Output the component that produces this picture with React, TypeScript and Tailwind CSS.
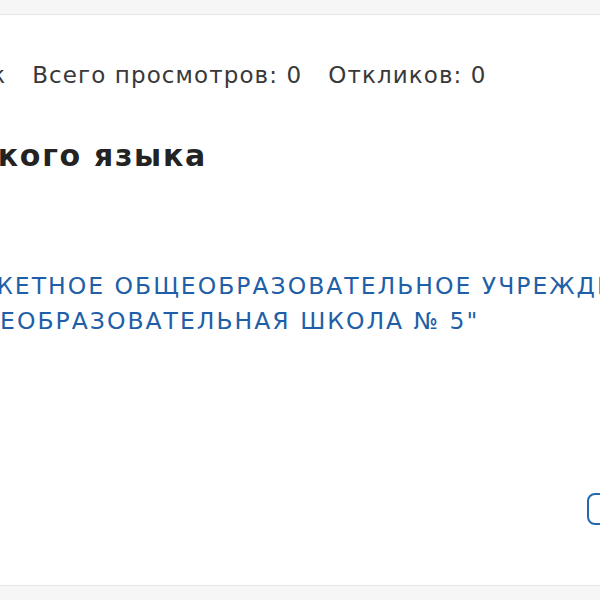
const stats = ['Размещён: понедельник', 'Всего просмотров: 0', 'Откликов: 0'];

export default function App() {
  return (
    <div className="h-[600px] w-[600px] overflow-hidden bg-[#f6f6f6] pt-[14px] font-['DejaVu_Sans',sans-serif]">
      <div className="-ml-[360px] flex h-[572px] w-[1150px] flex-col border-y border-[#e6e6e6] bg-white pl-[40px] pr-[40px] pt-[44px]">
        <ul className="ml-[5px] flex gap-[26px] text-[23px] leading-[32px] tracking-[1.1px] text-[#383838]">
          {stats.map((s) => (
            <li key={s} className="whitespace-nowrap">
              {s}
            </li>
          ))}
        </ul>

        <h1 className="mt-[45px] whitespace-nowrap text-[30px] font-bold leading-[40px] tracking-[1.7px] text-[#232323]">
          Учитель английского языка
        </h1>

        <a
          href="#"
          className="-ml-[18px] mt-[93px] block whitespace-nowrap text-[23.5px] uppercase leading-[35px] tracking-[2px] text-[#1f5fa8]"
        >
          МУНИЦИПАЛЬНОЕ БЮДЖЕТНОЕ ОБЩЕОБРАЗОВАТЕЛЬНОЕ УЧРЕЖДЕНИЕ
          <br />
          ГОРОДА "СРЕДНЯЯ ОБЩЕОБРАЗОВАТЕЛЬНАЯ ШКОЛА № 5"
        </a>

        <div className="mb-[60px] mt-auto flex justify-end">
          <button
            type="button"
            className="h-[32px] rounded-[8px] border-2 border-[#2468b4] px-[20px] text-[16px] leading-none text-[#2468b4]"
          >
            Откликнуться
          </button>
        </div>
      </div>
    </div>
  );
}
